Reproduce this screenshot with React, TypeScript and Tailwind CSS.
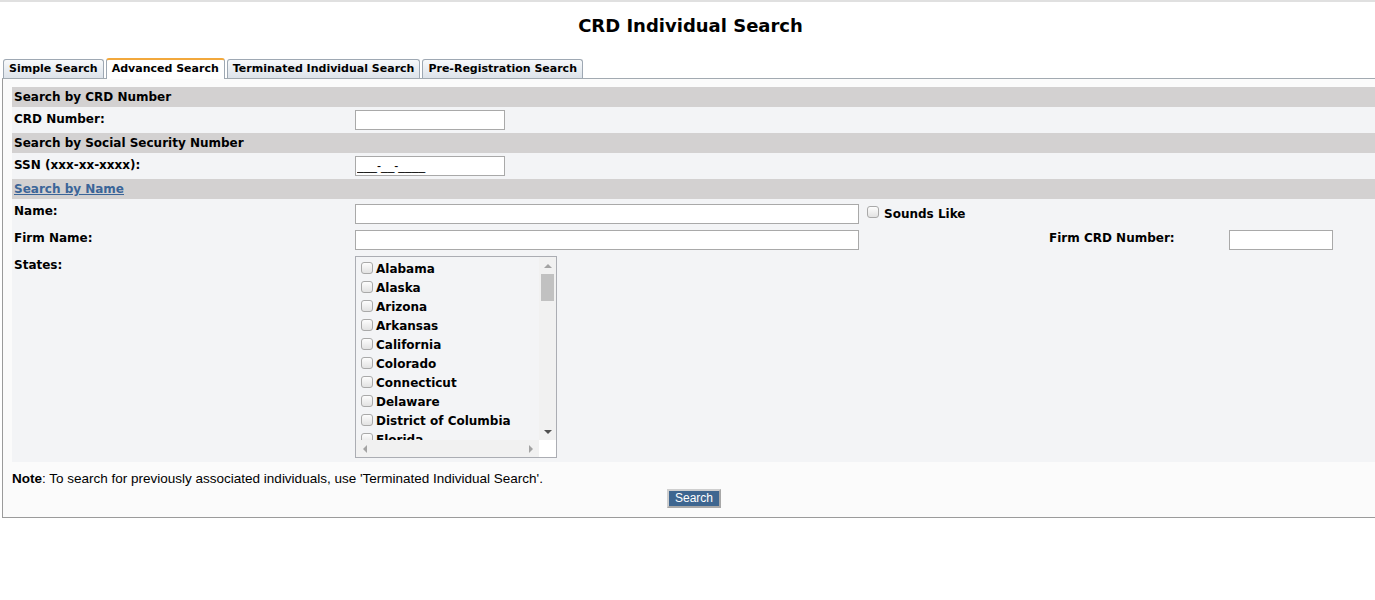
import React from "react";

const states = [
  "Alabama",
  "Alaska",
  "Arizona",
  "Arkansas",
  "California",
  "Colorado",
  "Connecticut",
  "Delaware",
  "District of Columbia",
  "Florida",
  "Georgia",
];

const tabs = [
  { name: "Simple Search", active: false },
  { name: "Advanced Search", active: true },
  { name: "Terminated Individual Search", active: false },
  { name: "Pre-Registration Search", active: false },
];

function Check() {
  return (
    <span className="inline-block w-[12px] h-[12px] shrink-0 rounded-[3px] border border-[#a9a9a9] bg-linear-to-b from-[#fdfdfd] to-[#e2e2e2]" />
  );
}

function SectionHeader({ children }: { children: React.ReactNode }) {
  return (
    <div className="h-[20px] bg-[#d3d1d1] pl-[2px] text-[12px] font-bold leading-[20px]">
      {children}
    </div>
  );
}

export default function App() {
  return (
    <div className="w-[1375px] h-[600px] overflow-hidden bg-white text-black font-['DejaVu_Sans',Verdana,sans-serif]">
      <div className="h-[2px] bg-[#e0e0e0]" />

      {/* Title */}
      <div className="w-[1381px] h-[56px] pt-[13px] text-center text-[18px] leading-[22px] font-bold">
        CRD Individual Search
      </div>

      <div className="ml-[2px] w-[1375px]">
        {/* Tabs */}
        <div className="relative z-10 flex items-end h-[20px] pl-[1px] gap-[2px]">
          {tabs.map((tab) =>
            tab.active ? (
              <div
                key={tab.name}
                className="h-[21px] -mb-[1px] px-[5px] rounded-t-[3px] border border-b-0 border-[#9ea8b3] border-t-2 border-t-[#f2a83c] bg-white text-[11px] font-bold leading-[18px]"
              >
                {tab.name}
              </div>
            ) : (
              <div
                key={tab.name}
                className="h-[19px] px-[5px] rounded-t-[3px] border border-b-0 border-[#9ea8b3] bg-linear-to-b from-[#f7f9fb] to-[#dde3ea] text-[11px] font-bold leading-[18px]"
              >
                {tab.name}
              </div>
            )
          )}
        </div>

        {/* Panel */}
        <div className="border border-[#9b9b9b] border-t-[#a2aab1] bg-[#fbfbfb] pl-[9px] pt-[8px] pb-[9px]">
          <SectionHeader>Search by CRD Number</SectionHeader>
          <div className="flex items-start h-[26px] bg-[#f3f4f6]">
            <div className="w-[341px] pl-[2px] pt-[4px] text-[12px] font-bold leading-[16px]">CRD Number:</div>
            <input className="mt-[3px] ml-[2px] w-[150px] h-[20px] border border-[#a9a9a9] bg-white" />
          </div>

          <SectionHeader>Search by Social Security Number</SectionHeader>
          <div className="flex items-start h-[26px] bg-[#f3f4f6]">
            <div className="w-[341px] pl-[2px] pt-[4px] text-[12px] font-bold leading-[16px]">SSN (xxx-xx-xxxx):</div>
            <input
              defaultValue="___-__-____"
              className="mt-[3px] ml-[2px] w-[150px] h-[20px] border border-[#a9a9a9] bg-white px-[1px] text-[12px] font-['Liberation_Sans',Arial,sans-serif]"
            />
          </div>

          <SectionHeader>
            <span className="text-[#3b6598] underline">Search by Name</span>
          </SectionHeader>

          <div className="bg-[#f3f4f6] pb-[4px] text-[12px] font-bold leading-[16px]">
            {/* Name */}
            <div className="flex items-start h-[26px] pt-[5px]">
              <div className="w-[341px] pl-[2px] -mt-[1px]">Name:</div>
              <input className="ml-[2px] w-[504px] h-[20px] border border-[#a9a9a9] bg-white" />
              <div className="ml-[8px] mt-[2px]">
                <Check />
              </div>
              <div className="ml-[5px] mt-[2px]">Sounds Like</div>
            </div>

            {/* Firm */}
            <div className="flex items-start h-[26px] pt-[5px]">
              <div className="w-[341px] pl-[2px]">Firm Name:</div>
              <input className="ml-[2px] w-[504px] h-[20px] border border-[#a9a9a9] bg-white" />
              <div className="ml-[190px] w-[180px]">Firm CRD Number:</div>
              <input className="w-[104px] h-[20px] border border-[#a9a9a9] bg-white" />
            </div>

            {/* States */}
            <div className="flex items-start pt-[5px]">
              <div className="w-[341px] pl-[2px] mt-[1px]">States:</div>
              <div className="ml-[2px] w-[202px] h-[202px] border border-[#abadb3] flex flex-col">
                <div className="flex flex-1 min-h-0">
                  <div className="flex-1 overflow-hidden pt-[3px] pl-[5px]">
                    {states.map((s) => (
                      <div key={s} className="flex items-start h-[19px] gap-[3px] leading-[19px] whitespace-nowrap">
                        <div className="mt-[1px]">
                          <Check />
                        </div>
                        <span>{s}</span>
                      </div>
                    ))}
                  </div>
                  {/* vertical scrollbar */}
                  <div className="w-[17px] bg-[#f1f1f1] flex flex-col items-center">
                    <div className="h-[17px] flex items-center justify-center">
                      <div className="w-0 h-0 border-x-[4px] border-x-transparent border-b-[4px] border-b-[#a3a3a3]" />
                    </div>
                    <div className="w-[13px] h-[27px] bg-[#c1c1c1]" />
                    <div className="flex-1" />
                    <div className="h-[17px] flex items-center justify-center">
                      <div className="w-0 h-0 border-x-[4px] border-x-transparent border-t-[4px] border-t-[#505050]" />
                    </div>
                  </div>
                </div>
                {/* horizontal scrollbar */}
                <div className="flex h-[17px]">
                  <div className="flex-1 bg-[#f1f1f1] flex items-center justify-between">
                    <div className="w-[17px] flex items-center justify-center">
                      <div className="w-0 h-0 border-y-[4px] border-y-transparent border-r-[4px] border-r-[#a3a3a3]" />
                    </div>
                    <div className="w-[17px] flex items-center justify-center">
                      <div className="w-0 h-0 border-y-[4px] border-y-transparent border-l-[4px] border-l-[#a3a3a3]" />
                    </div>
                  </div>
                  <div className="w-[17px] bg-white" />
                </div>
              </div>
            </div>
          </div>

          {/* Note */}
          <div className="mt-[9px] text-[13.5px] leading-[16px] font-['Liberation_Sans',Arial,sans-serif]">
            <span className="font-bold">Note</span>: To search for previously associated individuals, use 'Terminated Individual Search'.
          </div>
          <div className="mt-[2px] flex justify-center">
            <button className="w-[54px] h-[19px] border-2 border-[#cfcfcf] border-r-[#a8a8a8] border-b-[#a8a8a8] bg-[#3e6690] text-white text-[12px] leading-[15px] font-['Liberation_Sans',Arial,sans-serif]">
              Search
            </button>
          </div>
        </div>
      </div>
    </div>
  );
}
